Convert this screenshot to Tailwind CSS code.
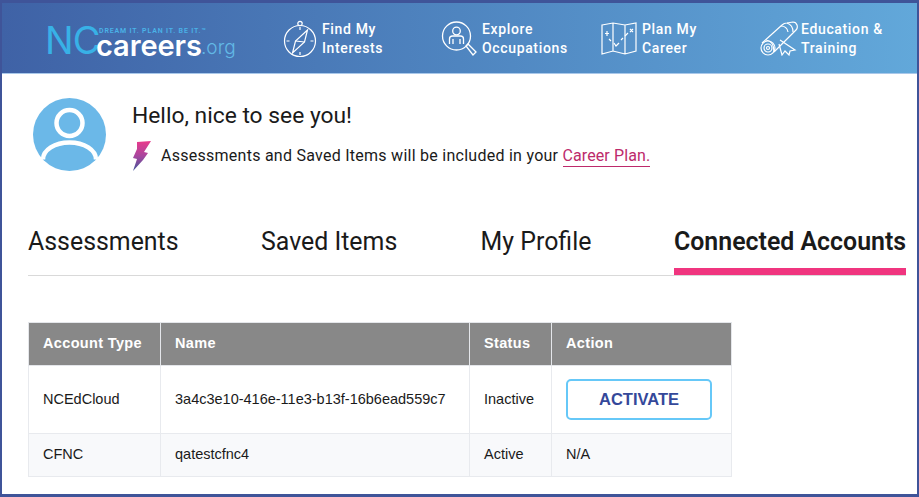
<!DOCTYPE html>
<html><head><meta charset="utf-8">
<script src="https://cdn.jsdelivr.net/npm/@tailwindcss/browser@4"></script>
</head>
<body class="bg-white">
<div class="w-[919px] h-[497px] border-l-2 border-r-2 border-t-[3px] border-b-[3px] border-[#3f5499] bg-white overflow-hidden font-['Roboto',sans-serif] text-[#1a1a1a]">
  <header class="h-[71px] flex items-center bg-gradient-to-r from-[#3f62a6] via-[#4f85c0] to-[#62a8da] border-b border-[#a9c8ea] relative">
    <div class="w-[281px] shrink-0 relative h-[70px]">
      <span class="absolute left-[43px] top-[15px] text-[38px] leading-[44px] tracking-[-1px] text-[#38b1e6] font-['Inter',sans-serif] font-normal">NC</span>
      <span class="absolute left-[94px] top-[32px] text-[29px] leading-[22px] tracking-[-0.1px] font-semibold text-white font-['Inter',sans-serif]">careers</span>
      <span class="absolute left-[199px] top-[33px] text-[19px] leading-[24px] font-light text-[#62b9e6] font-['Inter',sans-serif]">.org</span>
      <span class="absolute left-[97px] top-[24px] text-[7px] leading-[8px] tracking-[0.85px] font-semibold text-[#4ab3e8] whitespace-nowrap">DREAM IT. PLAN IT. BE IT.™</span>
    </div>
    <nav class="flex items-center text-white font-medium text-[14px] leading-[19px] tracking-[0.65px]">
      <div class="flex items-center w-[158px] gap-[5px] pt-[2px]">
        <svg class="w-[34px] h-[38px] shrink-0" viewBox="0 0 33 38" fill="none" stroke="white" stroke-width="1.2"><circle cx="16.500" cy="21" r="15.500"/><circle cx="16.500" cy="3.500" r="2.200"/><path d="M24 10 L12 21 L9 33 L21 22 Z"/><path d="M12 21 L21 22"/><path d="M16.500 7v3M16.500 32v3M3 21h3M27 21h3"/></svg>
        <div class="-mt-[1px]"><div>Find My</div><div>Interests</div></div>
      </div>
      <div class="flex items-center w-[160px] gap-[5px] pt-[1px]">
        <svg class="w-[36px] h-[36px] shrink-0" viewBox="0 0 36 36" fill="none" stroke="white" stroke-width="1.3"><circle cx="15.500" cy="15" r="14"/><circle cx="15.500" cy="10" r="3.800"/><path d="M8.500 23v-5q0-3 3-3h8q3 0 3 3v5M12 18v5M19 18v5"/><path d="M25 25l2-2 8 8-3 3z"/></svg>
        <div><div>Explore</div><div>Occupations</div></div>
      </div>
      <div class="flex items-center w-[159px] gap-[5px] pt-[1px]">
        <svg class="w-[36px] h-[33px] shrink-0" viewBox="0 0 36 33" fill="none" stroke="white" stroke-width="1.2"><path d="M1 3l11-2 12 2 11-2v28l-11 3-12-3-11 3zM12 1v28M24 3v29"/><path d="M6 9v5M4 11.500h4M29 7l3 3m0-3l-3 3M8 17l2 2M13 21l2 3 3-3M20 18l2-2M24 14l3-3"/></svg>
        <div><div>Plan My</div><div>Career</div></div>
      </div>
      <div class="flex items-center gap-[3px] pt-[1px]">
        <svg class="w-[38px] h-[35px] shrink-0" viewBox="0 0 38 35" fill="none" stroke="white" stroke-width="1.2"><path d="M2 22L22 4q2-2 5-2l6-1q3 0 4 3t-1 5l-3 3L14 31"/><path d="M21 5q6 0 7 6M27 2q6 2 6 9"/><path d="M6 19q8 1 8 12"/><circle cx="8" cy="27" r="7"/><circle cx="8" cy="27" r="4"/><circle cx="8" cy="27" r="1.500"/><path d="M20 19l15 10-5 1-1 4-4-4-3 4-3-11"/></svg>
        <div class="whitespace-nowrap"><div>Education &amp;</div><div>Training</div></div>
      </div>
    </nav>
  </header>

  <section class="flex pl-[31px] pt-[24px]">
    <svg class="w-[73px] h-[73px] shrink-0" viewBox="0 0 73 73">
      <circle cx="36.500" cy="36.500" r="36.500" fill="#6bb8e8"/>
      <circle cx="36.500" cy="25" r="13" fill="none" stroke="white" stroke-width="4.500"/>
      <path d="M10 61.500A26.500 17 0 0 1 63 61.500" fill="none" stroke="white" stroke-width="4.500"/>
    </svg>
    <div class="ml-[26px]">
      <h1 class="text-[22.800px] leading-[30px] mt-[3px] font-normal text-[#1a1a1a]">Hello, nice to see you!</h1>
      <div class="flex items-center mt-[9px]">
        <svg class="w-[20px] h-[32px] shrink-0" viewBox="0 0 20 32">
          <defs><linearGradient id="bolt" x1="0" y1="0" x2="0" y2="1"><stop offset="0" stop-color="#ea3a8c"/><stop offset="0.5" stop-color="#a8479e"/><stop offset="1" stop-color="#3f5499"/></linearGradient></defs>
          <path d="M5 2L19 1L12 12L16 13L11 20L1 31L5 19L1 18L5 9Z" fill="url(#bolt)"/>
        </svg>
        <p class="ml-[9px] text-[16px] leading-[22px] tracking-[0.26px] whitespace-nowrap">Assessments and Saved Items will be included in your <a class="text-[#bd2a6b] border-b border-[#bd2a6b] pb-[1px] tracking-[0.1px]">Career Plan.</a></p>
      </div>
    </div>
  </section>

  <nav class="mt-[50px] ml-[26px] mr-[11px] border-b border-[#d9d9d9] h-[54px] flex text-[24.900px] leading-[34px] text-[#1a1a1a]">
    <div class="w-[233px] pt-[3px]">Assessments</div>
    <div class="w-[219.600px] pt-[3px]">Saved Items</div>
    <div class="w-[193.400px] pt-[3px]">My Profile</div>
    <div class="w-[232px] h-[53px] pt-[3px] border-b-[7px] border-[#f0357f] font-semibold whitespace-nowrap">Connected Accounts</div>
  </nav>

  <table class="ml-[26px] mt-[46px] w-[703px] table-fixed border-collapse font-['Liberation_Sans',sans-serif] text-[14.500px] text-[#1a1a1a]">
    <colgroup><col class="w-[132px]"><col class="w-[309px]"><col class="w-[82px]"><col class="w-[180px]"></colgroup>
    <thead>
      <tr class="h-[43px] bg-[#888888] text-white text-left">
        <th class="pl-[14px] font-bold tracking-[0.35px] border border-[#e4e6ea]">Account Type</th>
        <th class="pl-[14px] font-bold tracking-[0.35px] border border-[#e4e6ea]">Name</th>
        <th class="pl-[14px] font-bold tracking-[0.35px] border border-[#e4e6ea]">Status</th>
        <th class="pl-[14px] font-bold tracking-[0.35px] border border-[#e4e6ea]">Action</th>
      </tr>
    </thead>
    <tbody>
      <tr class="h-[68px]">
        <td class="pl-[14px] border border-[#e8eaee]">NCEdCloud</td>
        <td class="pl-[14px] border border-[#e8eaee]">3a4c3e10-416e-11e3-b13f-16b6ead559c7</td>
        <td class="pl-[14px] border border-[#e8eaee]">Inactive</td>
        <td class="pl-[14px] border border-[#e8eaee]">
          <div class="w-[146px] h-[41px] flex items-center justify-center rounded-[5px] border-2 border-[#66c8f8] text-[#34489a] font-bold text-[16.500px]">ACTIVATE</div>
        </td>
      </tr>
      <tr class="h-[43px] bg-[#f8f9fb]">
        <td class="pl-[14px] border border-[#e8eaee]">CFNC</td>
        <td class="pl-[14px] border border-[#e8eaee]">qatestcfnc4</td>
        <td class="pl-[14px] border border-[#e8eaee]">Active</td>
        <td class="pl-[14px] border border-[#e8eaee]">N/A</td>
      </tr>
    </tbody>
  </table>
</div>
</body></html>
